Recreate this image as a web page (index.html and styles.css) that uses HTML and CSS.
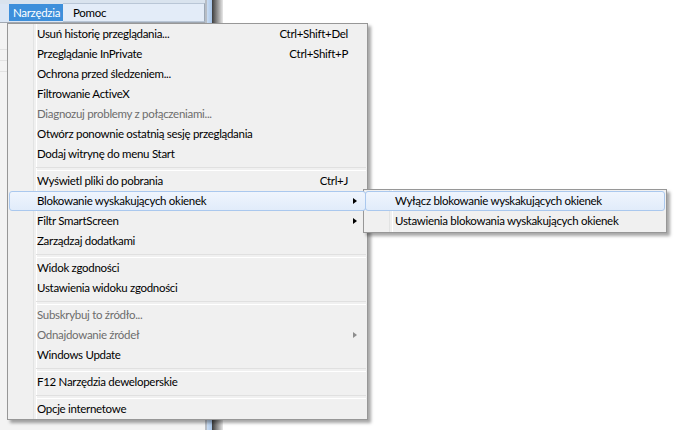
FILE: index.html
```html
<!DOCTYPE html>
<html lang="pl">
<head>
<meta charset="utf-8">
<title>Narzędzia</title>
<link rel="stylesheet" href="styles.css">
</head>
<body>
<div class="screen">
  <div class="pane">
    <div class="topstrip"></div>
    <div class="menubar">
      <span class="mb-item mb-active">Narzędzia</span>
      <span class="mb-item mb-box">Pomoc</span>
    </div>
    <div class="pane-body">
      <div class="pane-line"></div>
      <div class="pane-line"></div>
      <div class="pane-line"></div>
    </div>
  </div>
  <div class="frame">
    <div class="frame-a"></div>
    <div class="frame-b"></div>
    <div class="frame-c"></div>
  </div>
  <div class="white"></div>

  <div class="menu main">
    <div class="item"><span class="label">Usuń historię przeglądania...</span><span class="key">Ctrl+Shift+Del</span></div>
    <div class="item"><span class="label">Przeglądanie InPrivate</span><span class="key">Ctrl+Shift+P</span></div>
    <div class="item"><span class="label">Ochrona przed śledzeniem...</span></div>
    <div class="item"><span class="label">Filtrowanie ActiveX</span></div>
    <div class="item disabled"><span class="label">Diagnozuj problemy z połączeniami...</span></div>
    <div class="item"><span class="label">Otwórz ponownie ostatnią sesję przeglądania</span></div>
    <div class="item"><span class="label">Dodaj witrynę do menu Start</span></div>
    <div class="sep"></div>
    <div class="item"><span class="label">Wyświetl pliki do pobrania</span><span class="key">Ctrl+J</span></div>
    <div class="item hot"><span class="label">Blokowanie wyskakujących okienek</span><span class="arrow"></span></div>
    <div class="item"><span class="label">Filtr SmartScreen</span><span class="arrow"></span></div>
    <div class="item"><span class="label">Zarządzaj dodatkami</span></div>
    <div class="sep"></div>
    <div class="item"><span class="label">Widok zgodności</span></div>
    <div class="item"><span class="label">Ustawienia widoku zgodności</span></div>
    <div class="sep"></div>
    <div class="item disabled"><span class="label">Subskrybuj to źródło...</span></div>
    <div class="item disabled"><span class="label">Odnajdowanie źródeł</span><span class="arrow"></span></div>
    <div class="item"><span class="label">Windows Update</span></div>
    <div class="sep"></div>
    <div class="item"><span class="label">F12 Narzędzia deweloperskie</span></div>
    <div class="sep"></div>
    <div class="item"><span class="label">Opcje internetowe</span></div>
  </div>

  <div class="menu sub">
    <div class="item hot"><span class="label">Wyłącz blokowanie wyskakujących okienek</span></div>
    <div class="item"><span class="label">Ustawienia blokowania wyskakujących okienek</span></div>
  </div>
</div>
</body>
</html>
```

FILE: styles.css
```css
* { box-sizing: border-box; }
html, body { margin: 0; padding: 0; }
body {
  width: 680px;
  height: 430px;
  overflow: hidden;
  background: #ffffff;
  font-family: Lato, "Noto Sans", "DejaVu Sans", sans-serif;
  font-size: 11.5px;
  letter-spacing: -0.3px;
  color: #000;
}
.screen {
  position: relative;
  width: 680px;
  height: 430px;
  display: flex;
}
.pane {
  width: 205px;
  display: flex;
  flex-direction: column;
  background: #f3f3f3;
}
.topstrip {
  height: 4px;
  background: #d9e3ee;
}
.menubar {
  height: 19px;
  display: flex;
  align-items: stretch;
  background: #dbe6f4;
  border-bottom: 1px solid #a0a8b2;
  padding-left: 9px;
}
.mb-item {
  display: flex;
  align-items: center;
  line-height: 1;
}
.mb-active {
  background: #3d8fdb;
  color: #fff;
  padding: 0 0 0 4px;
  width: 54px;
  margin-bottom: 1px;
}
.mb-box {
  flex: 1;
  padding-left: 10px;
  background: #e3ecf8;
  border-top: 1px solid #b9c6d6;
  border-bottom: 1px solid #b9c6d6;
  border-right: 1px solid #9aa7b6;
  margin-top: -1px;
}
.pane-body {
  flex: 1;
  padding-top: 16px;
}
.pane-line {
  height: 11px;
  border-bottom: 1px solid #e2e2e2;
}
.frame {
  width: 18px;
  display: flex;
}
.frame-a {
  width: 2px;
  background: #b7bdc5;
}
.frame-b {
  width: 5px;
  background: linear-gradient(to right, #c9dcf2, #a8c6ea);
}
.frame-c {
  width: 11px;
  background: linear-gradient(to right, #3c3c3c, #8a8a8a 45%, #e8e8e8);
}
.white {
  flex: 1;
  background: #fff;
}

/* menus */
.menu {
  position: absolute;
  background: #f0f0f0;
  border: 1px solid #979797;
  box-shadow: 3px 3px 3px rgba(0, 0, 0, 0.35);
  padding: 0 1px;
  display: flex;
  flex-direction: column;
}
.menu::before {
  content: "";
  position: absolute;
  top: 0;
  bottom: 0;
  left: 25px;
  width: 2px;
  border-left: 1px solid #e2e3e3;
  border-right: 1px solid #ffffff;
}
.main {
  left: 7px;
  top: 23px;
  width: 361px;
  height: 397px;
}
.sub {
  left: 363px;
  top: 189px;
  width: 304px;
  height: 44px;
  padding-top: 1px;
}
.item {
  position: relative;
  height: 20px;
  display: flex;
  align-items: center;
  padding-left: 27px;
  padding-right: 17px;
  padding-bottom: 1px;
  border: 1px solid transparent;
  border-radius: 3px;
  white-space: nowrap;
}
.sub .item { padding-left: 29px; }
.item .label { flex: 1; }
.item .key { text-align: right; }
.item.disabled { color: #6d6d6d; }
.item.hot {
  border-color: #aac8ee;
  background: linear-gradient(to bottom, #eff5fd, #e1ecfa);
  z-index: 1;
}
.arrow {
  position: absolute;
  right: 8px;
  top: 5.5px;
  width: 0;
  height: 0;
  border-top: 3.5px solid transparent;
  border-bottom: 3.5px solid transparent;
  border-left: 4px solid #000;
}
.item.disabled .arrow { border-left-color: #8d8d8d; }
.sep {
  height: 7px;
  margin-left: 27px;
  position: relative;
}
.sep::after {
  content: "";
  position: absolute;
  left: 0;
  right: 0;
  top: 3px;
  height: 2px;
  border-top: 1px solid #e0e0e0;
  border-bottom: 1px solid #ffffff;
}
```
